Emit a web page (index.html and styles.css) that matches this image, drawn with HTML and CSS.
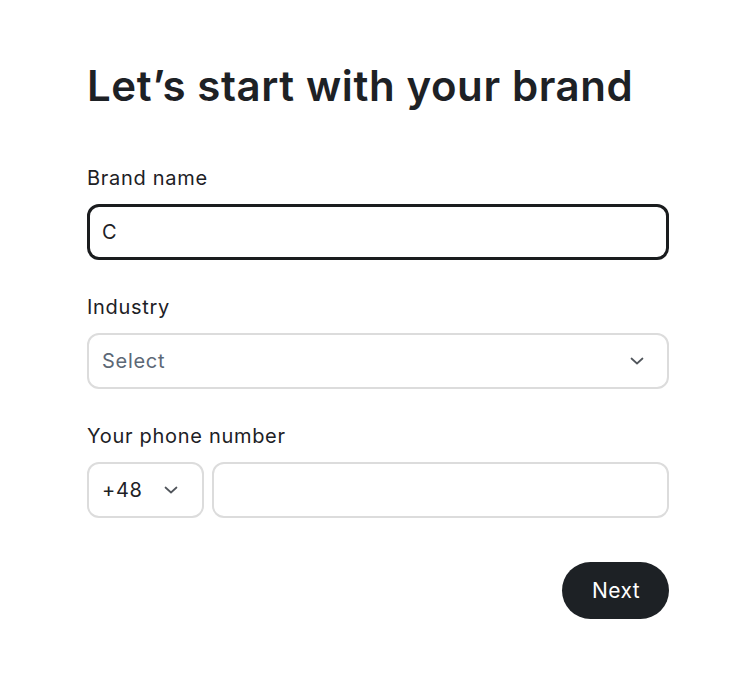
FILE: index.html
```html
<!DOCTYPE html>
<html lang="en">
<head>
<meta charset="utf-8">
<title>Brand</title>
<link rel="stylesheet" href="styles.css">
</head>
<body>
<main class="page">
  <h1 class="title">Let’s start with your brand</h1>
  <form class="form">
    <div class="field">
      <label class="label">Brand name</label>
      <div class="input input-active"><span class="value">C</span></div>
    </div>
    <div class="field">
      <label class="label">Industry</label>
      <div class="input select">
        <span class="placeholder">Select</span>
        <svg class="chev" width="14" height="8" viewBox="0 0 14 8"><path d="M1.5 1.5 L7 6.5 L12.5 1.5" fill="none" stroke="#50555b" stroke-width="1.7" stroke-linecap="round" stroke-linejoin="round"/></svg>
      </div>
    </div>
    <div class="field">
      <label class="label">Your phone number</label>
      <div class="phone-row">
        <div class="input code">
          <span class="value">+48</span>
          <svg class="chev" width="14" height="8" viewBox="0 0 14 8"><path d="M1.5 1.5 L7 6.5 L12.5 1.5" fill="none" stroke="#50555b" stroke-width="1.7" stroke-linecap="round" stroke-linejoin="round"/></svg>
        </div>
        <div class="input number"></div>
      </div>
    </div>
    <div class="actions">
      <button type="button" class="btn">Next</button>
    </div>
  </form>
</main>
</body>
</html>
```

FILE: styles.css
```css
* { box-sizing: border-box; }
html, body { margin: 0; padding: 0; background: #ffffff; }
body {
  font-family: Inter, "Noto Sans", sans-serif;
  color: #1d2125;
}
.page {
  width: 582px;
  margin-left: 87px;
  padding-top: 60px;
}
.title {
  margin: 0;
  font-size: 42px;
  line-height: 52px;
  font-weight: 600;
  letter-spacing: 0.6px;
}
.form {
  margin-top: 52px;
  display: flex;
  flex-direction: column;
  gap: 33px;
}
.field {
  display: flex;
  flex-direction: column;
  gap: 12px;
}
.label {
  font-size: 20px;
  line-height: 28px;
  font-weight: 400;
  letter-spacing: 0.7px;
}
.input {
  height: 56px;
  border: 2px solid #dcdcdc;
  border-radius: 12px;
  display: flex;
  align-items: center;
  padding: 0 13px;
  font-size: 20px;
  letter-spacing: 0.7px;
}
.input-active {
  border: 3px solid #1a1c1e;
  padding: 0 12px;
}
.select { justify-content: space-between; padding-right: 23px; }
.placeholder { color: #5c6876; }
.phone-row {
  display: flex;
  gap: 8px;
}
.code {
  width: 117px;
  justify-content: space-between;
  padding-right: 24px;
}
.number { flex: 1; }
.chev { display: block; }
.actions {
  display: flex;
  justify-content: flex-end;
  margin-top: 11px;
}
.btn {
  height: 57px;
  padding: 0 29px 0 30px;
  border: none;
  border-radius: 29px;
  background: #1d2125;
  color: #ffffff;
  font-family: Inter, "Noto Sans", sans-serif;
  font-size: 21px;
  font-weight: 400;
  letter-spacing: 0.4px;
}
```
